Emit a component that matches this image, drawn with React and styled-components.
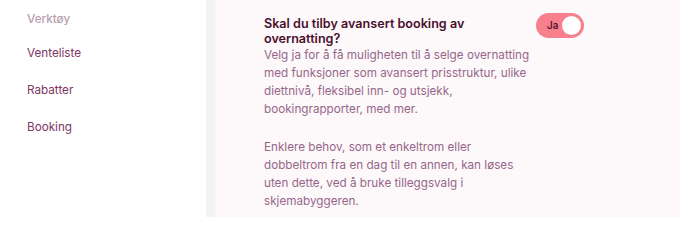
import React from "react";
import styled, { createGlobalStyle } from "styled-components";

const Global = createGlobalStyle`
  html, body { margin: 0; padding: 0; }
  body {
    font-family: Inter, "Noto Sans", "Liberation Sans", sans-serif;
    background: #ffffff;
    -webkit-font-smoothing: antialiased;
  }
`;

const Page = styled.div`
  display: flex;
  width: 680px;
  height: 217px;
  overflow: hidden;
`;

const Sidebar = styled.nav`
  width: 206px;
  flex: none;
  background: #ffffff;
  padding: 12px 0 0 27px;
  box-sizing: border-box;
  display: flex;
  flex-direction: column;
`;

const SectionLabel = styled.div`
  font-size: 11.7px;
  font-weight: 500;
  line-height: 14px;
  color: #b99fb0;
  margin-bottom: 20px;
`;

const NavItem = styled.a`
  display: block;
  font-size: 11.7px;
  font-weight: 400;
  line-height: 14px;
  height: 37px;
  color: #7d3566;
  text-decoration: none;
`;

const Divider = styled.div`
  width: 9px;
  flex: none;
  background: #f4f3f3;
  border-right: 1px solid #f8f6f6;
`;

const Main = styled.main`
  flex: 1;
  background: #fdf8f9;
  padding: 17px 0 0 48px;
  display: flex;
  align-items: flex-start;
  gap: 4px;
`;

const TextCol = styled.div`
  width: 268px;
  flex: none;
`;

const Title = styled.h2`
  margin: 0;
  font-size: 12.6px;
  font-weight: 600;
  line-height: 14.5px;
  color: #4a0f2e;
`;

const Paragraph = styled.p`
  margin: 0 0 20px;
  font-size: 11.7px;
  font-weight: 400;
  line-height: 18px;
  color: #96678a;
`;

const Toggle = styled.button`
  width: 48px;
  height: 25px;
  flex: none;
  margin-top: -4px;
  border: none;
  border-radius: 13px;
  background: ${(p) => (p.$on ? "#f8808d" : "#d9cfd4")};
  display: flex;
  align-items: center;
  justify-content: space-between;
  padding: 0 3px 0 11px;
  box-sizing: border-box;
  cursor: pointer;
`;

const ToggleLabel = styled.span`
  font-family: Inter, "Liberation Sans", sans-serif;
  font-size: 9.8px;
  font-weight: 600;
  color: #521530;
`;

const Knob = styled.span`
  width: 19px;
  height: 19px;
  border-radius: 50%;
  background: #ffffff;
`;

export default function App() {
  return (
    <>
      <Global />
      <Page>
        <Sidebar>
          <SectionLabel>Verktøy</SectionLabel>
          <NavItem href="#">Venteliste</NavItem>
          <NavItem href="#">Rabatter</NavItem>
          <NavItem href="#">Booking</NavItem>
        </Sidebar>
        <Divider />
        <Main>
          <TextCol>
            <Title>Skal du tilby avansert booking av overnatting?</Title>
            <Paragraph>
              Velg ja for å få muligheten til å selge overnatting med funksjoner
              som avansert prisstruktur, ulike diettnivå, fleksibel inn- og
              utsjekk, bookingrapporter, med mer.
            </Paragraph>
            <Paragraph>
              Enklere behov, som et enkeltrom eller dobbeltrom fra en dag til en
              annen, kan løses uten dette, ved å bruke tilleggsvalg i
              skjemabyggeren.
            </Paragraph>
          </TextCol>
          <Toggle $on aria-pressed="true">
            <ToggleLabel>Ja</ToggleLabel>
            <Knob />
          </Toggle>
        </Main>
      </Page>
    </>
  );
}
